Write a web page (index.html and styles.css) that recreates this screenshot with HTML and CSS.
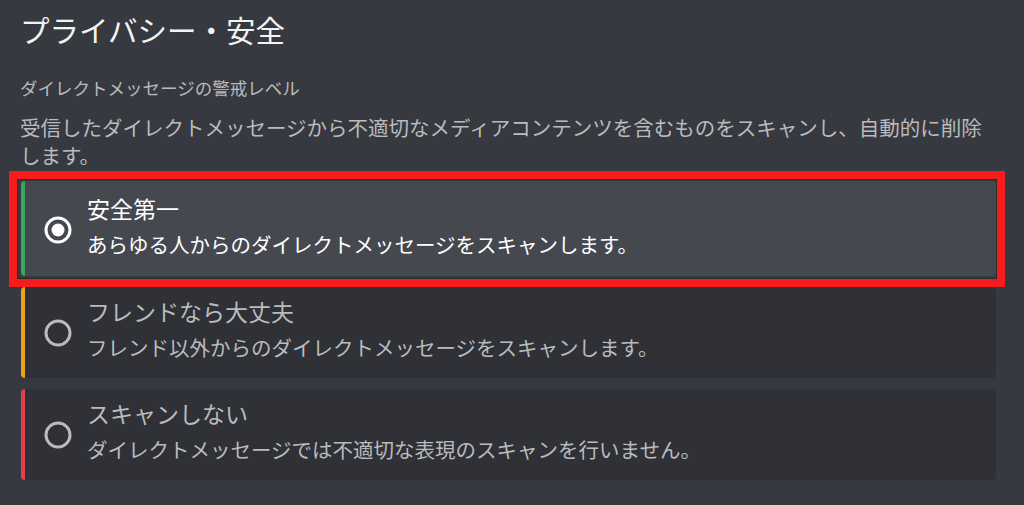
FILE: index.html
```html
<!DOCTYPE html>
<html lang="ja">

<head>
    <meta charset="UTF-8">
    <meta name="viewport" content="width=device-width, initial-scale=1.0">
    <title>プライバシー・安全</title>
    <link rel="stylesheet" href="styles.css">
</head>

<body>
    <div class="page">
        <h1 class="title">プライバシー・安全</h1>
        <div class="label">ダイレクトメッセージの警戒レベル</div>
        <p class="note">受信したダイレクトメッセージから不適切なメディアコンテンツを含むものをスキャンし、自動的に削除します。</p>

        <div class="options">
            <!-- 選択中 -->
            <div class="option option-safe selected">
                <svg class="radio" width="30" height="30" viewBox="0 0 30 30">
                    <circle cx="15" cy="15" r="12" fill="none" stroke="#ffffff" stroke-width="3" />
                    <circle cx="15" cy="15" r="6.5" fill="#ffffff" />
                </svg>
                <div class="option-text">
                    <div class="option-name">安全第一</div>
                    <div class="option-desc">あらゆる人からのダイレクトメッセージをスキャンします。</div>
                </div>
                <div class="mark"></div>
            </div>
            <div class="option option-friends">
                <svg class="radio" width="30" height="30" viewBox="0 0 30 30">
                    <circle cx="15" cy="15" r="12" fill="none" stroke="#b9bbbe" stroke-width="3" />
                </svg>
                <div class="option-text">
                    <div class="option-name">フレンドなら大丈夫</div>
                    <div class="option-desc">フレンド以外からのダイレクトメッセージをスキャンします。</div>
                </div>
            </div>
            <div class="option option-off">
                <svg class="radio" width="30" height="30" viewBox="0 0 30 30">
                    <circle cx="15" cy="15" r="12" fill="none" stroke="#b9bbbe" stroke-width="3" />
                </svg>
                <div class="option-text">
                    <div class="option-name">スキャンしない</div>
                    <div class="option-desc">ダイレクトメッセージでは不適切な表現のスキャンを行いません。</div>
                </div>
            </div>
        </div>
    </div>
</body>

</html>
```

FILE: styles.css
```css
* {
    margin: 0;
    padding: 0;
    box-sizing: border-box;
}

body {
    background: #36393f;
    font-family: "Noto Sans CJK JP", "Noto Sans", sans-serif;
    color: #b9bbbe;
}

.page {
    min-height: 100vh;
    padding: 8px 0 0 20px;
}

.title {
    font-size: 29.5px;
    font-weight: 400;
    line-height: 42px;
    color: #f2f3f5;
}

.label {
    margin-top: 26px;
    font-size: 17.5px;
    line-height: 24px;
    color: #b9bbbe;
}

.note {
    width: 975px;
    margin-top: 13px;
    font-size: 20.5px;
    line-height: 28px;
    color: #b9bbbe;
}

.options {
    display: flex;
    flex-direction: column;
    gap: 11px;
    width: 975px;
    margin-top: 12px;
    margin-left: 1px;
}

.option {
    position: relative;
    display: flex;
    align-items: center;
    height: 91px;
    padding-left: 18px;
    background: #2f3136;
    border-left: 4px solid transparent;
    border-radius: 4px;
}

.option-safe {
    border-left-color: #3ba55c;
}

.option-friends {
    border-left-color: #e6a41f;
}

.option-off {
    border-left-color: #e0424a;
}

.option.selected {
    height: 95px;
    padding-top: 2px;
    background: #45484f;
}

.radio {
    flex-shrink: 0;
}

.option-text {
    margin-left: 14px;
    padding-bottom: 7px;
}

.option-name {
    font-size: 23px;
    line-height: 30px;
    color: #b9bbbe;
}

.option-desc {
    margin-top: 6px;
    font-size: 20.5px;
    line-height: 30px;
    color: #b9bbbe;
}

.selected .option-name,
.selected .option-desc {
    color: #ffffff;
}

/* 赤い囲み枠（注釈） */
.mark {
    position: absolute;
    top: -10px;
    left: -16px;
    width: 996px;
    height: 116px;
    border: 8px solid #f71b1b;
    box-shadow: inset 0 0 0 1px #2a2c30;
    pointer-events: none;
}
```
